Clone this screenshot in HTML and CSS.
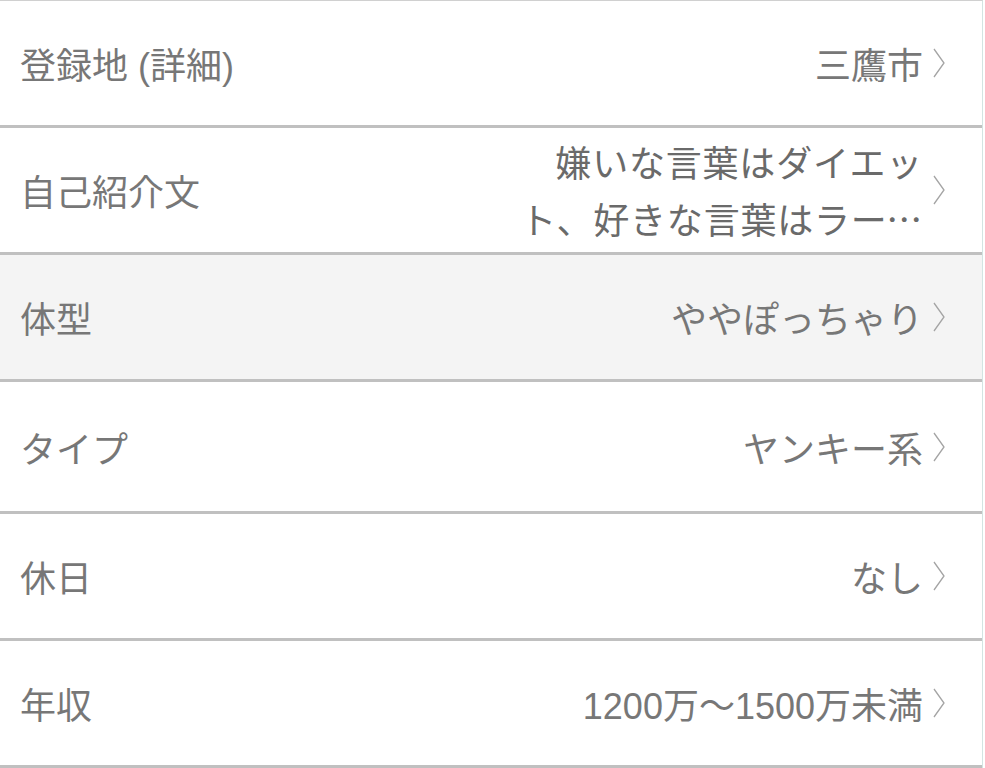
FILE: index.html
```html
<!DOCTYPE html>
<html lang="ja">
<head>
    <meta charset="UTF-8">
    <title>プロフィール</title>
    <link rel="stylesheet" href="styles.css">
</head>
<body>
    <ul class="profile-list">
        <li class="profile-row">
            <span class="row-label">登録地 (詳細)</span>
            <span class="row-value">三鷹市</span>
            <svg class="chevron" viewBox="0 0 12 30"><polyline points="1,1 11,15 1,29"></polyline></svg>
        </li>
        <li class="profile-row">
            <span class="row-label">自己紹介文</span>
            <span class="row-value row-value-long">嫌いな言葉はダイエット、好きな言葉はラーメン</span>
            <svg class="chevron" viewBox="0 0 12 30"><polyline points="1,1 11,15 1,29"></polyline></svg>
        </li>
        <li class="profile-row is-active">
            <span class="row-label">体型</span>
            <span class="row-value">ややぽっちゃり</span>
            <svg class="chevron" viewBox="0 0 12 30"><polyline points="1,1 11,15 1,29"></polyline></svg>
        </li>
        <li class="profile-row row-tall">
            <span class="row-label">タイプ</span>
            <span class="row-value">ヤンキー系</span>
            <svg class="chevron" viewBox="0 0 12 30"><polyline points="1,1 11,15 1,29"></polyline></svg>
        </li>
        <li class="profile-row">
            <span class="row-label">休日</span>
            <span class="row-value">なし</span>
            <svg class="chevron" viewBox="0 0 12 30"><polyline points="1,1 11,15 1,29"></polyline></svg>
        </li>
        <li class="profile-row">
            <span class="row-label">年収</span>
            <span class="row-value">1200万〜1500万未満</span>
            <svg class="chevron" viewBox="0 0 12 30"><polyline points="1,1 11,15 1,29"></polyline></svg>
        </li>
    </ul>
</body>
</html>
```

FILE: styles.css
```css
body {
    margin: 0;
    background-color: #fff;
    font-family: "Liberation Sans", "Noto Sans CJK JP", sans-serif;
}

.profile-list {
    list-style-type: none;
    margin: 0;
    padding: 0;
    width: 982px;
    border-top: 1px solid #d0d0d0;
    border-right: 1px solid #d3e4e2;
}

.profile-row {
    display: flex;
    align-items: center;
    height: 124px;
    padding: 0 37px 0 20px;
    border-bottom: 3px solid #c0c0c0;
    background-color: #fff;
}

.profile-row.is-active {
    background-color: #f4f4f4;
}

.profile-row.row-tall {
    height: 129px;
}

.row-label {
    flex: 1;
    font-size: 36px;
    color: #777;
    white-space: nowrap;
}

.row-value {
    font-size: 36px;
    color: #777;
    text-align: right;
}

.row-value-long {
    max-width: 410px;
    font-family: "Noto Sans CJK JP", sans-serif;
    letter-spacing: 0.8px;
    line-height: 57px;
    display: -webkit-box;
    -webkit-box-orient: vertical;
    -webkit-line-clamp: 2;
    overflow: hidden;
    color: #6a6a6a;
}

.chevron {
    width: 12px;
    height: 30px;
    margin-left: 10px;
    flex-shrink: 0;
}

.chevron polyline {
    fill: none;
    stroke: #a4a4a4;
    stroke-width: 1.3;
}
```
